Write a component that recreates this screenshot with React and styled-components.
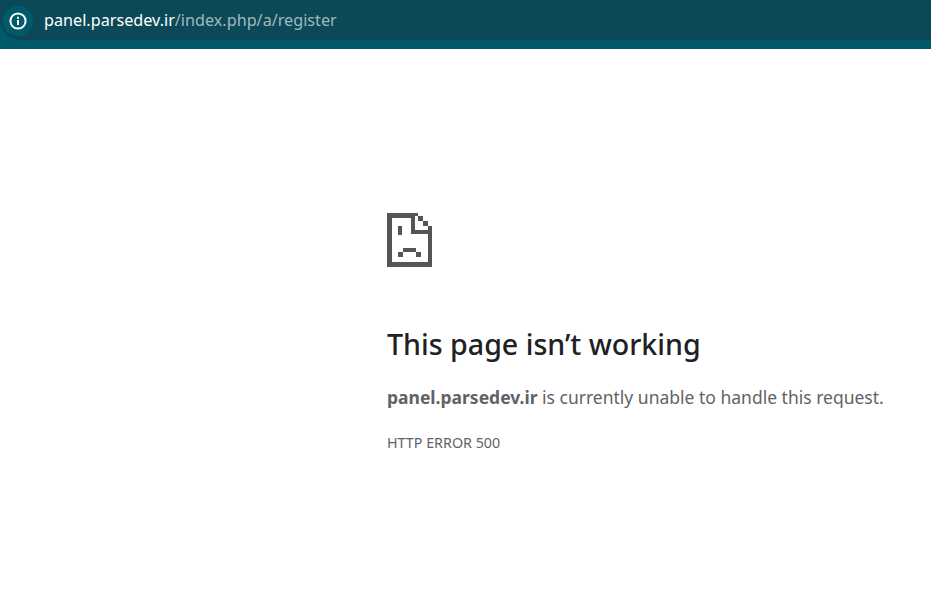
import React from "react"
import styled, { createGlobalStyle } from "styled-components"

const GlobalStyle = createGlobalStyle`
  html, body {
    margin: 0;
    background: #fff;
  }
  body {
    font-family: "Noto Sans", "Open Sans", sans-serif;
  }
`

const Page = styled.div`
  width: 931px;
  height: 610px;
  overflow: hidden;
  display: flex;
  flex-direction: column;
`

const Toolbar = styled.div`
  height: 49px;
  background: #015a6b;
  flex-shrink: 0;
`

const Omnibox = styled.div`
  height: 40px;
  background: #0c4958;
  border-radius: 0 0 0 20px;
  display: flex;
  align-items: center;
  padding-left: 3px;
  gap: 11px;
`

const InfoChip = styled.div`
  width: 30px;
  height: 30px;
  margin-top: 1px;
  border-radius: 50%;
  background: #015a6b;
  display: flex;
  align-items: center;
  justify-content: center;
`

const Url = styled.div`
  font-size: 16.2px;
  color: #fff;
  white-space: nowrap;
`

const UrlPath = styled.span`
  color: #9fb8bf;
`

const Content = styled.main`
  padding: 164px 0 0 387px;
`

const SadIcon = styled.svg`
  display: block;
  width: 45px;
  height: 54px;
  shape-rendering: crispEdges;
`

const Title = styled.h1`
  margin: 56px 0 0;
  font-size: 28.6px;
  line-height: 42px;
  font-weight: 500;
  color: #202124;
  white-space: nowrap;
`

const Message = styled.p`
  margin: 17px 0 0;
  font-size: 17.5px;
  line-height: 30px;
  color: #5f6368;
  white-space: nowrap;
`

const Host = styled.strong`
  font-weight: 700;
`

const Code = styled.div`
  margin-top: 21px;
  font-size: 14.3px;
  line-height: 20px;
  color: #5f6368;
  white-space: nowrap;
`

const InfoIcon = () => (
  <svg width="20" height="20" viewBox="0 0 20 20" fill="none">
    <circle cx="10" cy="10" r="7.6" stroke="#fff" strokeWidth="2" />
    <rect x="9" y="9" width="2" height="5" fill="#fff" />
    <rect x="9" y="5.8" width="2" height="2" fill="#fff" />
  </svg>
)

const SadFace = () => (
  <SadIcon viewBox="0 0 45 54" fill="#555">
    <path d="M0 0H28V17H45V54H0ZM5 5V49H41V21H24V5Z" />
    <rect x="28" y="0" width="3" height="3" />
    <rect x="31" y="3" width="5" height="5" />
    <rect x="36" y="8" width="5" height="5" />
    <rect x="41" y="13" width="4" height="4" />
    <rect x="11" y="13" width="4" height="9" />
    <rect x="16" y="35" width="13" height="4" />
    <rect x="11" y="39" width="5" height="5" />
    <rect x="29" y="39" width="5" height="5" />
  </SadIcon>
)

export default function App() {
  return (
    <Page>
      <GlobalStyle />
      <Toolbar>
        <Omnibox>
          <InfoChip>
            <InfoIcon />
          </InfoChip>
          <Url>
            panel.parsedev.ir<UrlPath>/index.php/a/register</UrlPath>
          </Url>
        </Omnibox>
      </Toolbar>
      <Content>
        <SadFace />
        <Title>This page isn’t working</Title>
        <Message>
          <Host>panel.parsedev.ir</Host> is currently unable to handle this request.
        </Message>
        <Code>HTTP ERROR 500</Code>
      </Content>
    </Page>
  )
}
